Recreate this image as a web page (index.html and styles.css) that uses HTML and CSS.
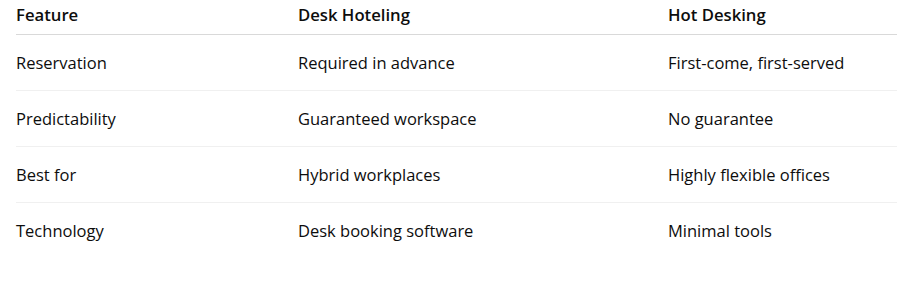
FILE: index.html
```html
<!DOCTYPE html>
<html>
<head>
<meta charset="utf-8">
<link rel="stylesheet" href="styles.css">
</head>
<body>
<table class="cmp">
  <thead>
    <tr><th class="c1">Feature</th><th class="c2">Desk Hoteling</th><th class="c3">Hot Desking</th></tr>
  </thead>
  <tbody>
    <tr><td>Reservation</td><td>Required in advance</td><td>First-come, first-served</td></tr>
    <tr><td>Predictability</td><td>Guaranteed workspace</td><td>No guarantee</td></tr>
    <tr><td>Best for</td><td>Hybrid workplaces</td><td>Highly flexible offices</td></tr>
    <tr class="last"><td>Technology</td><td>Desk booking software</td><td>Minimal tools</td></tr>
  </tbody>
</table>
</body>
</html>
```
FILE: styles.css
```css
html, body { margin: 0; padding: 0; background: #fff; }
body { font-family: "Open Sans", "Noto Sans", sans-serif; color: #0d0d0d; font-size: 16.5px; }
.cmp { margin-left: 16px; width: 881px; border-collapse: collapse; table-layout: fixed; }
.cmp th, .cmp td { text-align: left; padding: 0; vertical-align: middle; }
.cmp th { font-weight: 600; font-size: 16.7px; height: 34px; border-bottom: 1px solid #d9d9d9; line-height: 20px; padding-bottom: 3px; box-sizing: border-box; }
.cmp td { height: 56px; border-bottom: 1px solid #f0f0f0; box-sizing: border-box; line-height: 20px; padding-top: 1px; }
.cmp tr.last td { border-bottom: none; }
.c1 { width: 282px; }
.c2 { width: 370px; }
```
